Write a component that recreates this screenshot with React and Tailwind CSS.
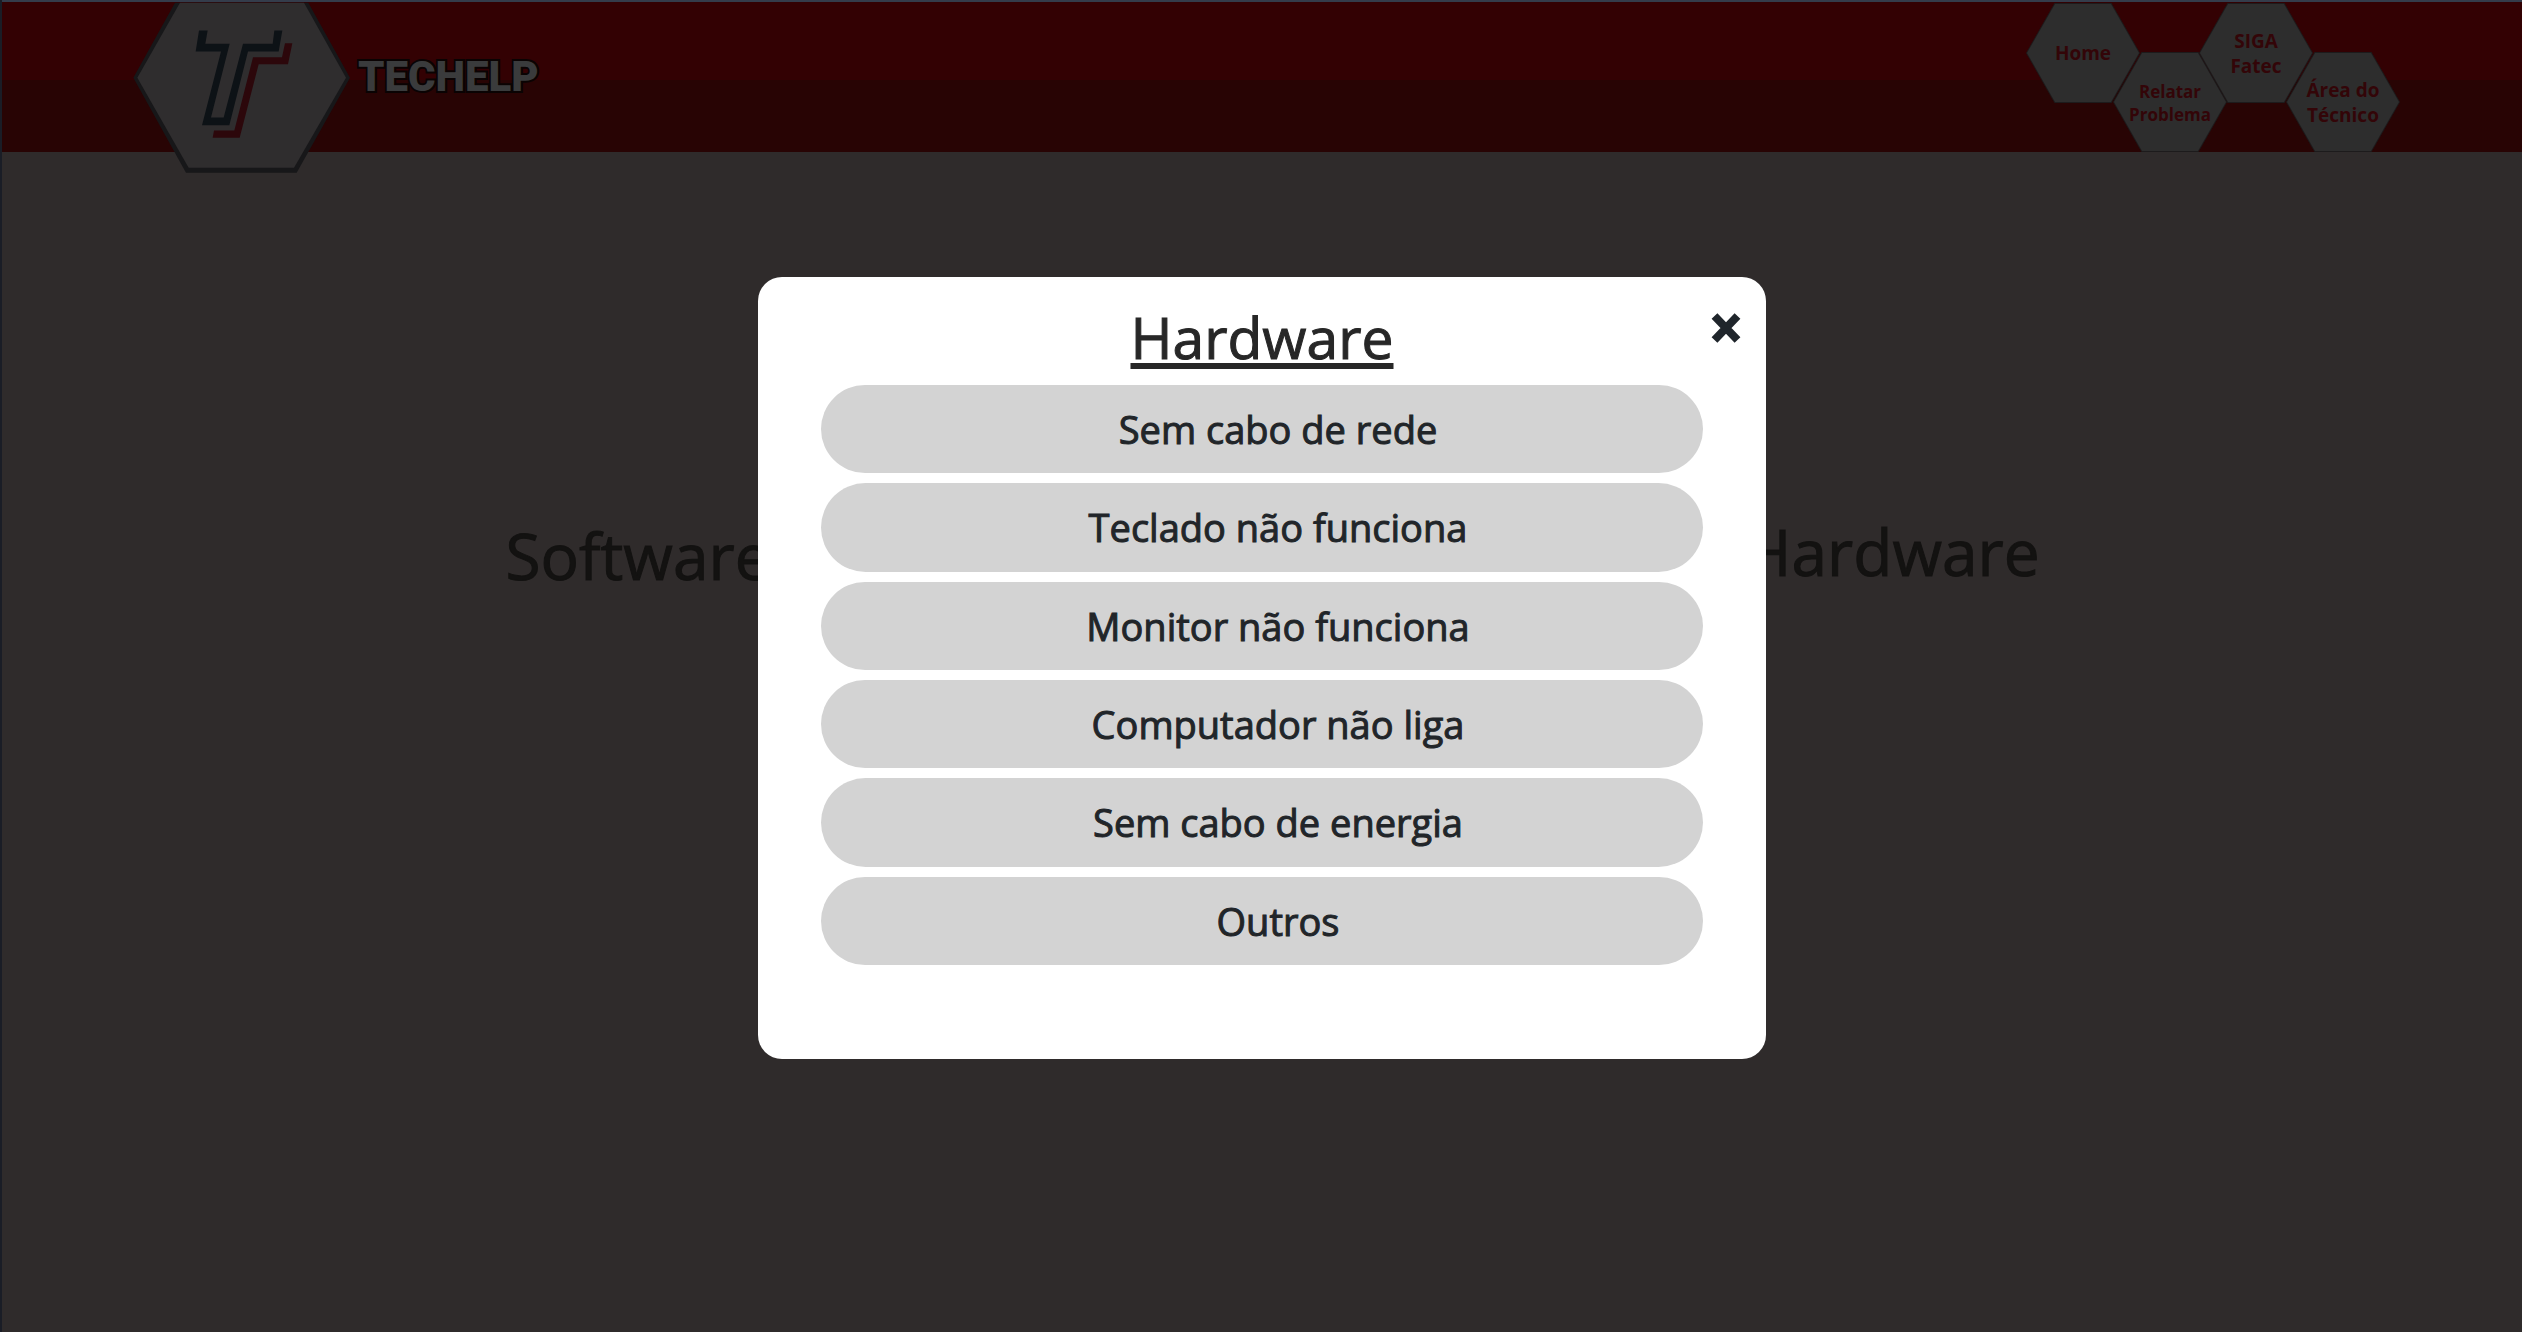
const problems = [
  "Sem cabo de rede",
  "Teclado não funciona",
  "Monitor não funciona",
  "Computador não liga",
  "Sem cabo de energia",
  "Outros",
];

const links = [
  { lines: ["Home"], size: "text-[19px] leading-[25px]", place: "" },
  { lines: ["Relatar", "Problema"], size: "text-[17px] leading-[23px]", place: "mt-[49px] -ml-[27px]" },
  { lines: ["SIGA", "Fatec"], size: "text-[19px] leading-[25px]", place: "-ml-[28px]" },
  { lines: ["Área do", "Técnico"], size: "text-[19px] leading-[25px]", place: "mt-[49px] -ml-[27px]" },
];

function Logo() {
  return (
    <svg viewBox="0 0 690 530" className="h-[177px] w-[230px] shrink-0" aria-hidden="true">
      <polygon points="135,8 535,8 660,233 500,518 168,518 10,233" fill="#171719" />
      <polygon points="150,8 522,8 648,233 492,503 176,503 22,233" fill="#2f2d2e" />
      <polygon
        points="207,91 233,91 226,131 299,131 243,352 281,352 339,131 428,131 433,91 457,91 446,154 354,154 298,375 216,375 273,154 197,154"
        fill="#0d1216"
      />
      <polygon
        points="465,129 487,129 474,192 386,192 329,413 248,413 252,391 313,391 369,171 456,171"
        fill="#2c070b"
      />
    </svg>
  );
}

function HexLink({ lines, size, place }) {
  return (
    <a
      href="#"
      className={`flex h-[100px] w-[114px] bg-[#1d1b1c] p-px [clip-path:polygon(25%_0,75%_0,100%_50%,75%_100%,25%_100%,0_50%)] ${place}`}
    >
      <span
        className={`flex w-full flex-col items-center justify-center bg-[#2d2d2d] pt-px text-center font-['Open_Sans',sans-serif] font-bold text-[#330508] [clip-path:polygon(25%_0,75%_0,100%_50%,75%_100%,25%_100%,0_50%)] ${size}`}
      >
        {lines.map((l) => (
          <span key={l}>{l}</span>
        ))}
      </span>
    </a>
  );
}

export default function App() {
  return (
    <div className="min-h-screen border-l-2 border-[#1a1d26] bg-[#2f2b2b] font-['Trebuchet_MS','Open_Sans',sans-serif]">
      <header className="flex h-[152px] items-start justify-between border-t-2 border-[#343c4b] bg-linear-to-b from-[#330103] from-52% to-[#280404] to-52% pr-[122px] pl-[128px]">
        <a href="#" className="-mt-[2px] flex items-start">
          <Logo />
          <span className="-ml-[2px] pt-[44px] font-['Roboto',sans-serif] text-[42px] leading-[66px] font-black text-[#3a3b3c] [paint-order:stroke_fill] [-webkit-text-stroke:4px_#0a0303]">
            TECHELP
          </span>
        </a>
        <nav className="flex items-start pt-px">
          {links.map((l) => (
            <HexLink key={l.lines[0]} {...l} />
          ))}
        </nav>
      </header>

      <main className="grid grid-cols-2 pt-[350px] text-center text-[64px] leading-[100px] text-[#131211] [-webkit-text-stroke:1px_#131211]">
        <h2 className="pt-1 pl-3">Software</h2>
        <h2>Hardware</h2>
      </main>

      <div className="fixed inset-0 flex items-start justify-center pt-[277px] pl-[2px]">
        <section
          role="dialog"
          aria-modal="true"
          aria-labelledby="dialog-title"
          className="relative w-2/5 rounded-3xl bg-white px-[63px] pt-[18px] pb-[94px] text-[#212529] [-webkit-text-stroke:1px_currentColor]"
        >
          <h1
            id="dialog-title"
            className="pb-[6px] text-center text-[57px] leading-[84px] text-[#272727] underline decoration-[6px] underline-offset-[4px] [text-decoration-skip-ink:none]"
          >
            Hardware
          </h1>
          <button type="button" aria-label="Fechar" className="absolute top-[34px] right-[24px] p-px">
            <svg viewBox="0 0 30 32" className="h-[32px] w-[30px]" fill="none" stroke="#1f252b" strokeWidth="8">
              <path d="M3.5 4 26.5 28M26.5 4 3.5 28" />
            </svg>
          </button>
          <ul className="grid min-h-[580px] gap-[10px]">
            {problems.map((p) => (
              <li key={p} className="flex">
                <button
                  type="button"
                  className="w-full rounded-full bg-[#d3d3d3] pl-8 text-[38px] leading-[60px]"
                >
                  {p}
                </button>
              </li>
            ))}
          </ul>
        </section>
      </div>
    </div>
  );
}
